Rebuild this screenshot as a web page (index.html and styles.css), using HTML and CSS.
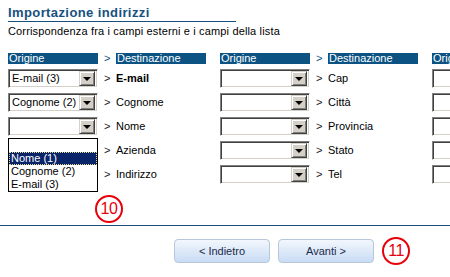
FILE: index.html
```html
<!DOCTYPE html>
<html lang="it">
<head>
    <meta charset="UTF-8">
    <meta name="viewport" content="width=device-width, initial-scale=1.0">
    <title>Importazione indirizzi</title>
    <link rel="stylesheet" href="styles.css">
</head>
<body>
    <div class="page">
        <h1 class="title">Importazione indirizzi</h1>
        <p class="subtitle">Corrispondenza fra i campi esterni e i campi della lista</p>

        <div class="mapping">
            <div class="group">
                <div class="head">Origine</div><div class="arrow head-arrow">&gt;</div><div class="head">Destinazione</div>

                <div class="combo"><span>E-mail (3)</span><i class="drop"></i></div><div class="arrow">&gt;</div><div class="field bold">E-mail</div>
                <div class="combo"><span>Cognome (2)</span><i class="drop"></i></div><div class="arrow">&gt;</div><div class="field">Cognome</div>
                <div class="combo open">
                    <span></span><i class="drop"></i>
                    <ul class="list">
                        <li></li>
                        <li class="selected">Nome (1)</li>
                        <li>Cognome (2)</li>
                        <li>E-mail (3)</li>
                    </ul>
                </div><div class="arrow">&gt;</div><div class="field">Nome</div>
                <div class="combo"><span></span><i class="drop"></i></div><div class="arrow">&gt;</div><div class="field">Azienda</div>
                <div class="combo"><span></span><i class="drop"></i></div><div class="arrow">&gt;</div><div class="field">Indirizzo</div>
            </div>

            <div class="group">
                <div class="head">Origine</div><div class="arrow head-arrow">&gt;</div><div class="head">Destinazione</div>

                <div class="combo"><span></span><i class="drop"></i></div><div class="arrow">&gt;</div><div class="field">Cap</div>
                <div class="combo"><span></span><i class="drop"></i></div><div class="arrow">&gt;</div><div class="field">Città</div>
                <div class="combo"><span></span><i class="drop"></i></div><div class="arrow">&gt;</div><div class="field">Provincia</div>
                <div class="combo"><span></span><i class="drop"></i></div><div class="arrow">&gt;</div><div class="field">Stato</div>
                <div class="combo"><span></span><i class="drop"></i></div><div class="arrow">&gt;</div><div class="field">Tel</div>
            </div>

            <!-- next page of fields, only its first column peeks in -->
            <div class="group partial">
                <div class="head">Origine</div>
                <div class="combo"><span></span><i class="drop"></i></div>
                <div class="combo"><span></span><i class="drop"></i></div>
                <div class="combo"><span></span><i class="drop"></i></div>
                <div class="combo"><span></span><i class="drop"></i></div>
                <div class="combo"><span></span><i class="drop"></i></div>
            </div>
        </div>

        <div class="marker marker-list">10</div>
    </div>

    <div class="footer">
        <button class="nav-btn">&lt; Indietro</button>
        <button class="nav-btn">Avanti &gt;</button>
        <div class="marker">11</div>
    </div>
</body>
</html>
```

FILE: styles.css
```css
html, body {
    margin: 0;
    padding: 0;
    width: 450px;
    height: 277px;
    overflow: hidden;
    background-color: #ffffff;
    font-family: 'Liberation Sans', Arial, sans-serif;
    font-size: 11px;
    color: #000000;
}
.page {
    padding: 5px 0 0 8px;
}
.title {
    margin: 0;
    width: 228px;
    height: 16px;
    line-height: 15px;
    font-size: 13px;
    font-weight: bold;
    letter-spacing: 0.4px;
    color: #17507f; /* Dark blue title */
    border-bottom: 1px solid #17507f;
}
.subtitle {
    margin: 3px 0 0 0;
    line-height: 13px;
    letter-spacing: 0.15px;
    white-space: nowrap;
}
.mapping {
    display: flex;
    margin-top: 15px;
}
.group {
    flex-shrink: 0;
    display: grid;
    grid-template-columns: 90px 18px 90px;
    grid-template-rows: 11px repeat(5, 19px);
    row-gap: 5px;
    margin-right: 14px;
}
.group.partial {
    grid-template-columns: 90px;
    margin-right: 0;
}
.head {
    background-color: #0c5384; /* Header bar blue */
    color: #ffffff;
    height: 11px;
    line-height: 11px;
    padding-left: 1px;
    overflow: hidden;
    margin-bottom: 4px;
}
.arrow {
    padding-left: 6px;
    line-height: 19px;
    color: #222222;
}
.head-arrow {
    line-height: 11px;
    color: #0c5384;
}
.field {
    line-height: 19px;
    white-space: nowrap;
}
.bold {
    font-weight: bold;
}

/* Classic sunken combo box */
.combo {
    position: relative;
    box-sizing: border-box;
    height: 19px;
    background-color: #ffffff;
    border: 1px solid;
    border-color: #808080 #ffffff #ffffff #808080;
    box-shadow: inset 1px 1px #404040, inset -1px -1px #d4d0c8;
    display: flex;
    align-items: center;
    padding: 0 2px 0 3px;
}
.combo span {
    flex: 1;
    white-space: nowrap;
    line-height: 13px;
}
.drop {
    box-sizing: border-box;
    width: 16px;
    height: 15px;
    background-color: #d4d0c8;
    border: 1px solid;
    border-color: #d4d0c8 #404040 #404040 #d4d0c8;
    box-shadow: inset 1px 1px #ffffff, inset -1px -1px #808080;
    display: flex;
    align-items: center;
    justify-content: center;
}
.drop::after {
    content: "";
    border-left: 4px solid transparent;
    border-right: 4px solid transparent;
    border-top: 4px solid #000000;
    margin-top: 1px;
}

/* Open dropdown list */
.list {
    position: absolute;
    top: 19px;
    left: -1px;
    width: 90px;
    box-sizing: border-box;
    margin: 1px 0 0 0;
    padding: 0;
    list-style: none;
    background-color: #ffffff;
    border: 1px solid #000000;
    z-index: 2;
}
.list li {
    height: 13px;
    line-height: 13px;
    padding-left: 2px;
    box-sizing: border-box;
    white-space: nowrap;
}
.list .selected {
    background-color: #0a246a;
    color: #ffffff;
    outline: 1px dotted #e8d890;
    outline-offset: -1px;
}

/* Red callout markers */
.marker {
    box-sizing: border-box;
    width: 28px;
    height: 28px;
    border: 2px solid #e8000b;
    border-radius: 50%;
    color: #e8000b;
    font-size: 16px;
    line-height: 24px;
    text-align: center;
    letter-spacing: -0.5px;
}
.marker-list {
    margin: 11px 0 0 87px;
}

.footer {
    margin-top: 2px;
    border-top: 1px solid #1f4f78;
    display: flex;
    align-items: center;
    gap: 8px;
    padding: 11px 0 0 174px;
}
.nav-btn {
    width: 96px;
    height: 24px;
    border: 1px solid #b7c6d9;
    border-radius: 4px;
    background: linear-gradient(#f3f7fd, #dde9f8 50%, #c9dcf5);
    color: #1b2a4d;
    font-family: 'Liberation Sans', Arial, sans-serif;
    font-size: 11px;
    padding: 0;
}
```
